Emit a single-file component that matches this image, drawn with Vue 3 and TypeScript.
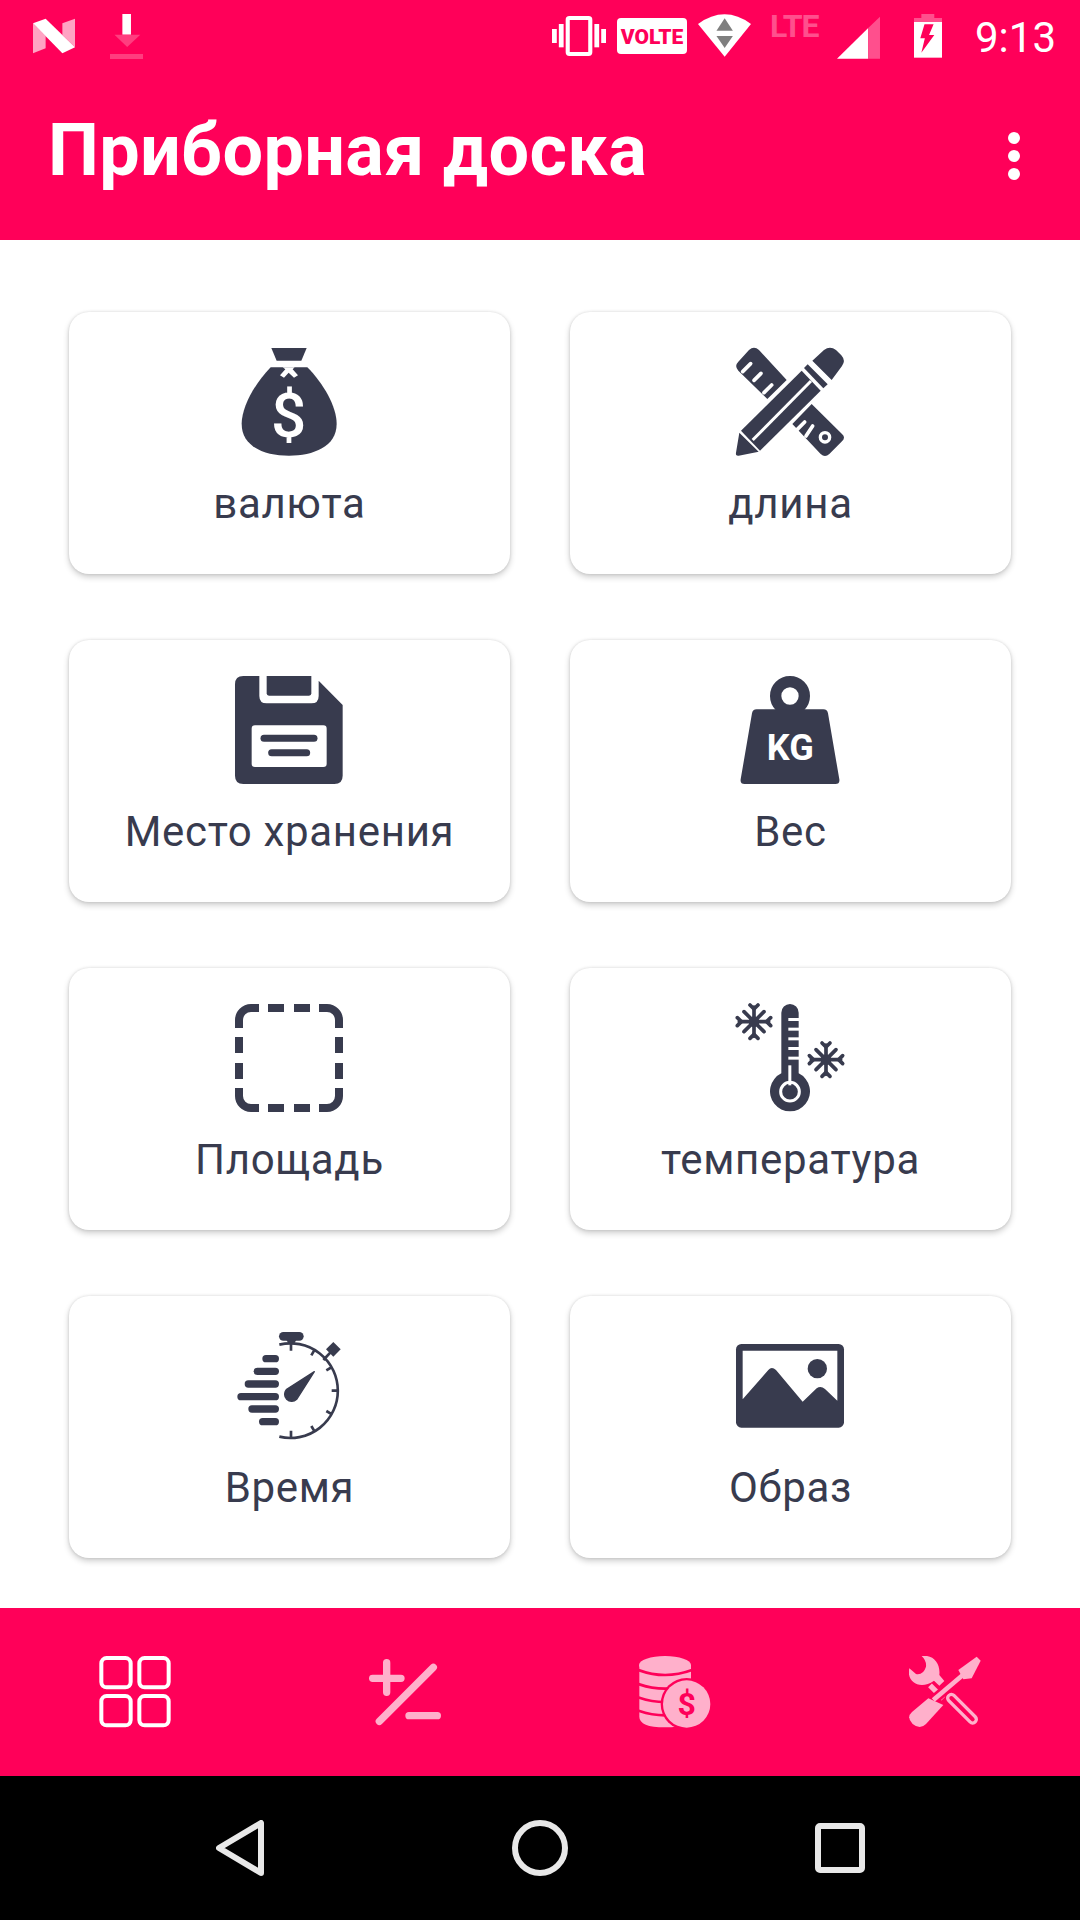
<script setup lang="ts">
// zoomed-crop coordinates are kept in the icons, so the groups scale by a third
const third = "scale(0.33333)";
function at(x: number, y: number) {
  return `translate(${x} ${y}) ${third}`;
}
</script>

<template>
  <div class="screen">
    <div class="status">
      <div class="status-left">
        <svg width="42" height="72" viewBox="96 0 123 216" preserveAspectRatio="none">
          <polygon points="96,70 133,108 133,145 96,160" fill="#ffa3c3" />
          <polygon points="182,70 219,56 219,142 182,105" fill="#ffa3c3" />
          <polygon points="96,70 133,56 219,142 182,160" fill="#fff" />
        </svg>
        <svg width="33" height="72" viewBox="319 0 96 216" preserveAspectRatio="none">
          <rect x="355" y="42" width="25" height="62" fill="#fff" />
          <polygon points="332,104 407,104 369,141" fill="#ff3d7f" />
          <rect x="319" y="162" width="96" height="15" fill="#ff3d7f" />
        </svg>
      </div>
      <div class="status-right">
        <svg width="54" height="72" viewBox="32 0 158 216" preserveAspectRatio="none">
          <rect x="78" y="54" width="66" height="108" rx="5" fill="none" stroke="#fff" stroke-width="12" />
          <rect x="32" y="87" width="14" height="42" fill="#fff" />
          <rect x="52" y="72" width="14" height="70" fill="#fff" />
          <rect x="156" y="72" width="14" height="70" fill="#fff" />
          <rect x="176" y="87" width="14" height="42" fill="#fff" />
        </svg>
        <svg class="s-volte" width="70" height="72" viewBox="0 0 70 72">
          <rect x="0" y="18" width="70" height="36" rx="4" fill="#fff" />
          <text x="35" y="43.500" class="volte-text">VOLTE</text>
        </svg>
        <svg class="s-wifi" width="53" height="72" viewBox="458 0 155 216" preserveAspectRatio="none">
          <path d="M536 170 L458 72 Q536 14 613 72 Z" fill="#fff" />
          <polygon points="536,55 512,92 560,92" fill="#7f7f7f" />
          <polygon points="512,108 560,108 536,144" fill="#7f7f7f" />
        </svg>
        <span class="lte">LTE</span>
        <svg class="s-signal" width="43" height="72" viewBox="863 0 124 216" preserveAspectRatio="none">
          <polygon points="863,176 953,84 953,176" fill="#fff" />
          <polygon points="953,84 987,50 987,176 953,176" fill="#ff4f8d" />
        </svg>
        <svg class="s-battery" width="28" height="72" viewBox="1087 0 80 216" preserveAspectRatio="none">
          <path d="M1108 42 H1145 V54 H1167 V66 H1087 V54 H1108 Z" fill="#ff4f8d" />
          <rect x="1087" y="66" width="80" height="107" fill="#fff" />
          <polygon points="1117,73 1143,73 1130,105 1145,105 1108,158 1118,115 1105,115" fill="#ff0059" />
        </svg>
        <span class="clock">9:13</span>
      </div>
    </div>

    <header class="toolbar">
      <h1 class="title">Приборная доска</h1>
      <div class="more"><i></i><i></i><i></i></div>
    </header>

    <main class="grid">
      <div class="card">
        <svg class="icon" viewBox="-0.5 0 108 108">
          <g :transform="at(-175.5, -48)">
            <polygon points="634,144 740,144 724,182 650,182" />
            <path d="M632 202 H742 C790 250 830 320 830 372 C830 440 760 467 687 467 C614 467 545 440 545 372 C545 320 585 250 632 202 Z" />
            <polygon points="668,202 704,202 698,208 714,226 702,233 686,218 672,233 660,226 676,208" fill="#fff" />
          </g>
          <text x="53" y="89" class="dollar">$</text>
        </svg>
        <span class="label">валюта</span>
      </div>

      <div class="card">
        <svg class="icon" viewBox="-0.5 0 108 108">
          <g :transform="at(-56.5, -18)">
            <path d="M207 60 Q222 47 237 60 L320 150 L262 207 L175 122 Q162 108 175 95 Z" />
            <path d="M395 222 L486 312 Q498 322 486 334 L448 372 Q435 384 422 372 L337 282 Z" />
            <g stroke="#fff" stroke-width="11" stroke-linecap="round" fill="none">
              <line x1="188" y1="125" x2="212" y2="101" />
              <line x1="222" y1="151" x2="243" y2="130" />
              <line x1="252" y1="188" x2="275" y2="165" />
              <line x1="352" y1="298" x2="374" y2="276" />
              <line x1="378" y1="318" x2="398" y2="288" />
            </g>
            <circle cx="435" cy="322" r="14" fill="none" stroke="#fff" stroke-width="10" />
            <polygon points="365,122 422,182 240,362 183,302" stroke="#fff" stroke-width="10" paint-order="stroke" />
            <line x1="218" y1="330" x2="393" y2="153" stroke="#fff" stroke-width="9" />
            <polygon points="383,103 443,163 430,175 372,114" />
            <path d="M397 92 L432 60 Q450 46 468 60 L484 76 Q498 92 486 108 L455 150 Z" />
            <path d="M178 308 L236 365 L176 377 Q166 378 168 368 Z" />
          </g>
        </svg>
        <span class="label">длина</span>
      </div>

      <div class="card">
        <svg class="icon" viewBox="-0.5 0 108 108">
          <g :transform="at(-35.5, -16)">
            <path d="M130 48 H178 V108 Q178 130 200 130 H334 Q356 130 356 108 V62 L428 135 V347 Q428 372 403 372 H130 Q105 372 105 347 V73 Q105 48 130 48 Z" />
            <path d="M200 48 H334 V100 Q334 107 327 107 H207 Q200 107 200 100 Z" />
            <rect x="155" y="196" width="225" height="125" rx="10" fill="#fff" />
            <line x1="192" y1="234.500" x2="342" y2="234.500" stroke-width="21" stroke-linecap="round" />
            <line x1="215" y1="278" x2="320" y2="278" stroke-width="21" stroke-linecap="round" />
          </g>
        </svg>
        <span class="label">Место хранения</span>
      </div>

      <div class="card">
        <svg class="icon" viewBox="-0.5 0 108 108">
          <g :transform="at(-36.5, -16)">
            <circle cx="270" cy="108" r="43" fill="none" stroke-width="34" />
            <path d="M170 148 H370 Q382 148 384 160 L418 358 Q420 372 406 372 H134 Q120 372 122 358 L156 160 Q158 148 170 148 Z" />
          </g>
          <text x="53.800" y="84" class="kg">KG</text>
        </svg>
        <span class="label">Вес</span>
      </div>

      <div class="card">
        <svg class="icon dashed" viewBox="0 0 108 108">
          <path d="M4 24 V16 A12 12 0 0 1 16 4 H24" />
          <path d="M84 4 H92 A12 12 0 0 1 104 16 V24" />
          <path d="M104 84 V92 A12 12 0 0 1 92 104 H84" />
          <path d="M24 104 H16 A12 12 0 0 1 4 92 V84" />
          <path d="M33 4 H49 M59 4 H75 M33 104 H49 M59 104 H75" />
          <path d="M4 33 V49 M4 59 V75 M104 33 V49 M104 59 V75" />
        </svg>
        <span class="label">Площадь</span>
      </div>

      <div class="card">
        <svg class="icon" viewBox="-0.5 0 108 108">
          <defs>
            <g id="flake" fill="none" stroke="#383b4e" stroke-width="11" stroke-linecap="round" stroke-linejoin="round">
              <circle r="16" fill="#383b4e" stroke="none" />
              <path d="M-44 0 H44 M0 -44 V44 M-30 -30 L30 30 M-30 30 L30 -30" />
              <path d="M-12 -50 L0 -38 L12 -50 M-12 50 L0 38 L12 50 M-50 -12 L-38 0 L-50 12 M50 -12 L38 0 L50 12" />
            </g>
          </defs>
          <g :transform="at(-36.5, -14)">
            <path d="M244 68 A26 26 0 0 1 296 68 V250 A60 60 0 1 1 244 250 Z" />
            <g fill="#fff">
              <rect x="265" y="84" width="32" height="9" />
              <rect x="265" y="113" width="32" height="9" />
              <rect x="265" y="142" width="32" height="9" />
              <rect x="265" y="171" width="32" height="9" />
              <rect x="265" y="200" width="32" height="9" />
              <rect x="265" y="226" width="9" height="60" />
            </g>
            <circle cx="270" cy="305" r="28" fill="none" stroke="#fff" stroke-width="9" />
            <use href="#flake" x="162" y="95" />
            <use href="#flake" x="378" y="209" />
          </g>
        </svg>
        <span class="label">температура</span>
      </div>

      <div class="card">
        <svg class="icon" viewBox="-0.5 0 108 108">
          <g :transform="at(-25.5, -12)">
            <rect x="207" y="36" width="74" height="26" rx="13" />
            <polygon points="228,58 260,58 252,72 236,72" />
            <g fill="none" stroke-width="8" stroke="#383b4e">
              <path d="M208 74 A142 142 0 1 1 208 350" />
              <path d="M243 70 V92 M243 332 V354 M365 212 H385 M304 106 L314 89 M349 151 L366 141 M349 273 L366 283 M304 318 L314 335 M340 120 L370 88" />
            </g>
            <polygon points="370,66 392,88 370,110 348,88" />
            <path d="M313 155 L260 238 A20 20 0 0 1 230 208 Z" stroke="#383b4e" stroke-width="4" stroke-linejoin="round" />
            <g stroke="#383b4e" stroke-width="22" stroke-linecap="round">
              <line x1="168" y1="116" x2="196" y2="116" />
              <line x1="142" y1="154" x2="196" y2="154" />
              <line x1="115" y1="192" x2="196" y2="192" />
              <line x1="93" y1="230" x2="196" y2="230" />
              <line x1="126" y1="267" x2="196" y2="267" />
              <line x1="158" y1="305" x2="196" y2="305" />
            </g>
          </g>
        </svg>
        <span class="label">Время</span>
      </div>

      <div class="card">
        <svg class="icon" viewBox="-0.5 0 108 108">
          <g :transform="at(-36.5, -12)">
            <rect x="108" y="72" width="324" height="251" rx="16" />
            <path d="M128 92 H412 V242 L375 207 Q362 196 350 205 L308 245 L228 150 Q215 138 205 150 L128 238 Z" fill="#fff" />
            <circle cx="352" cy="146" r="29" />
          </g>
        </svg>
        <span class="label">Образ</span>
      </div>
    </main>

    <nav class="tabs">
      <div class="tab">
        <svg width="72" height="72" viewBox="0 0 72 72">
          <g :transform="at(-39, -36)" fill="none" stroke="#fff" stroke-width="12">
            <rect x="124" y="114" width="88" height="88" rx="16" />
            <rect x="238" y="114" width="88" height="88" rx="16" />
            <rect x="124" y="228" width="88" height="88" rx="16" />
            <rect x="238" y="228" width="88" height="88" rx="16" />
          </g>
        </svg>
      </div>
      <div class="tab">
        <svg width="72" height="72" viewBox="0 0 72 72">
          <g :transform="at(-309, -36)" fill="none" stroke="#ffb0cb" stroke-width="22" stroke-linecap="round">
            <path d="M938 175 H1023 M980 128 V217 M1120 142 L958 304 M1047 287 H1132" />
          </g>
        </svg>
      </div>
      <div class="tab">
        <svg width="72" height="72" viewBox="0 0 72 72">
          <g :transform="at(-39, -36)">
            <path d="M118 135 H273 V290 Q273 322 195 322 Q118 322 118 290 Z" fill="#ffb0cb" />
            <ellipse cx="195" cy="135" rx="78" ry="27" fill="#ffb0cb" />
            <g fill="none" stroke="#ff0059" stroke-width="8">
              <path d="M115 150 Q195 180 276 150" />
              <path d="M115 192 Q195 220 276 192" />
              <path d="M115 232 Q195 260 276 232" />
              <path d="M115 272 Q195 300 276 272" />
            </g>
            <circle cx="260" cy="252" r="78" fill="#ff0059" />
            <circle cx="260" cy="252" r="71" fill="#ffb0cb" />
          </g>
          <text x="47.700" y="59" class="coin">$</text>
        </svg>
      </div>
      <div class="tab">
        <svg width="72" height="72" viewBox="0 0 72 72">
          <g :transform="at(-309, -36)" fill="#ffb0cb">
            <path d="M965 108 C1000 103 1022 130 1018 165 L1033 183 L1018 197 L1002 182 C960 212 918 185 928 145 L948 162 Q970 166 978 140 Q980 122 965 108 Z" />
            <line x1="1054" y1="234" x2="1118" y2="298" stroke="#ffb0cb" stroke-width="32" stroke-linecap="round" />
            <line x1="1054" y1="234" x2="1118" y2="298" stroke="#ff0059" stroke-width="12" stroke-linecap="round" />
            <line x1="990" y1="196" x2="1030" y2="236" stroke="#ffb0cb" stroke-width="16" />
            <line x1="1000" y1="240" x2="1100" y2="155" stroke="#ff0059" stroke-width="30" />
            <line x1="1000" y1="240" x2="1100" y2="155" stroke="#ffb0cb" stroke-width="14" />
            <polygon points="1075,150 1130,110 1142,122 1115,175 1090,178" />
            <path d="M985 235 L1030 255 L978 312 Q960 330 938 312 Q918 292 936 276 Z" />
          </g>
        </svg>
      </div>
    </nav>

    <div class="sysnav">
      <div class="nav-item">
        <svg width="48" height="56" viewBox="0 0 48 56">
          <path d="M45 3 V53 L3 28 Z" fill="none" stroke="#e8e8e8" stroke-width="6" stroke-linejoin="round" />
        </svg>
      </div>
      <div class="nav-item">
        <svg width="56" height="56" viewBox="0 0 56 56">
          <circle cx="28" cy="28" r="25" fill="none" stroke="#e8e8e8" stroke-width="6" />
        </svg>
      </div>
      <div class="nav-item">
        <svg width="50" height="50" viewBox="0 0 50 50">
          <rect x="3" y="3" width="44" height="44" rx="2" fill="none" stroke="#e8e8e8" stroke-width="6" />
        </svg>
      </div>
    </div>
  </div>
</template>

<style>
html,
body {
  margin: 0;
  background: #fff;
}
</style>

<style scoped>
.screen {
  width: 1080px;
  height: 1920px;
  display: flex;
  flex-direction: column;
  overflow: hidden;
  background: #fff;
  font-family: Roboto, "Noto Sans", sans-serif;
}
.status {
  height: 72px;
  flex: none;
  display: flex;
  justify-content: space-between;
  background: #ff0059;
}
.status-left {
  display: flex;
  gap: 35px;
  padding-left: 33px;
}
.status-right {
  display: flex;
  padding-right: 24px;
}
.s-volte {
  margin-left: 11px;
}
.s-wifi {
  margin-left: 11px;
}
.lte {
  width: 52px;
  margin-left: 19px;
  color: #ff4f8d;
  font-size: 32px;
  font-weight: 700;
  line-height: 53px;
  letter-spacing: -1px;
  white-space: nowrap;
}
.s-signal {
  margin-left: 15px;
}
.s-battery {
  margin-left: 34px;
}
.clock {
  margin-left: 33px;
  color: #fff;
  font-size: 42px;
  line-height: 76px;
}
.toolbar {
  height: 168px;
  flex: none;
  display: flex;
  align-items: center;
  justify-content: space-between;
  padding: 0 60px 10px 48px;
  box-sizing: border-box;
  background: #ff0059;
}
.title {
  margin: 0;
  color: #fff;
  font-size: 72px;
  font-weight: 700;
  line-height: 84px;
  letter-spacing: 0.3px;
}
.more {
  display: flex;
  flex-direction: column;
  gap: 6px;
  margin-top: 10px;
}
.more i {
  display: block;
  width: 12px;
  height: 12px;
  border-radius: 50%;
  background: #fff;
}
.grid {
  flex: 1;
  display: grid;
  grid-template-columns: 441px 441px;
  grid-auto-rows: 262px;
  gap: 66px 60px;
  padding: 72px 69px 0;
  box-sizing: border-box;
}
.card {
  display: flex;
  flex-direction: column;
  align-items: center;
  padding-top: 36px;
  box-sizing: border-box;
  border-radius: 20px;
  background: #fff;
  box-shadow: 0 3px 6px rgba(0, 0, 0, 0.2), 0 0 3px rgba(0, 0, 0, 0.12);
}
.icon {
  width: 108px;
  height: 108px;
  flex: none;
  margin-right: 1px;
  overflow: visible;
  fill: #383b4e;
  stroke: #383b4e;
  stroke-width: 0;
}
.dashed {
  fill: none;
  stroke-width: 8;
}
.label {
  margin-top: 24px;
  color: #383b4e;
  font-size: 42px;
  line-height: 48px;
  letter-spacing: 0.7px;
}
.dollar {
  fill: #fff;
  stroke: none;
  font-size: 62px;
  font-weight: 500;
  text-anchor: middle;
}
.kg {
  fill: #fff;
  stroke: none;
  font-size: 36px;
  font-weight: 700;
  text-anchor: middle;
}
.coin {
  fill: #ff0059;
  font-size: 32px;
  font-weight: 700;
  text-anchor: middle;
}
.volte-text {
  fill: #ff0059;
  font-size: 21px;
  font-weight: 900;
  text-anchor: middle;
}
.tabs {
  height: 168px;
  flex: none;
  display: flex;
  background: #ff0059;
}
.tab {
  flex: 1;
  display: flex;
  align-items: center;
  justify-content: center;
}
.sysnav {
  height: 144px;
  flex: none;
  display: flex;
  padding: 0 90px;
  background: #000;
}
.nav-item {
  flex: 1;
  display: flex;
  align-items: center;
  justify-content: center;
}
</style>
